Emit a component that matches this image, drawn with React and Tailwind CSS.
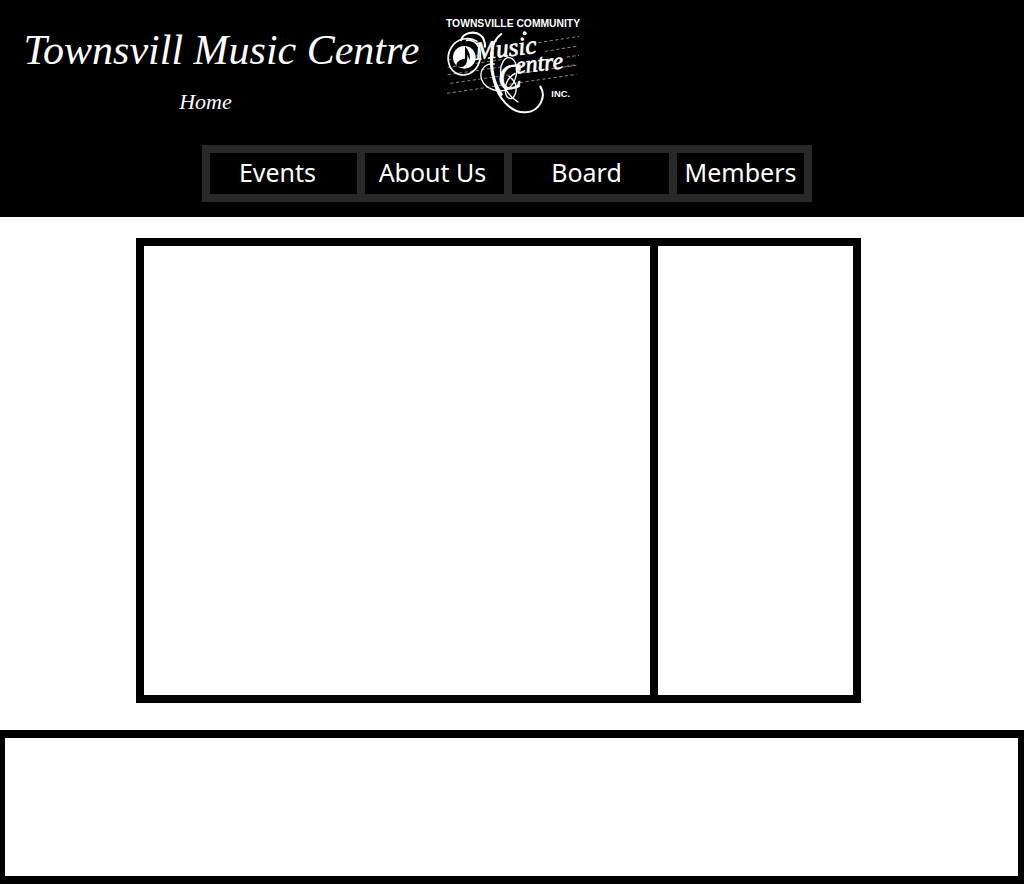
const links = [
  { label: 'Events', pad: 'pr-3' },
  { label: 'About Us', pad: 'pr-1' },
  { label: 'Board', pad: 'pr-2' },
  { label: 'Members', pad: 'pr-0' },
];

function Logo() {
  return (
    <svg
      viewBox="0 0 465 345"
      className="h-[115px] w-[155px] shrink-0"
      role="img"
      aria-label="Townsville Community Music Centre Inc."
      fill="none"
      stroke="#fff"
      strokeLinecap="round"
    >
      <g stroke="#c8c8c8" strokeWidth="2" strokeDasharray="10 7" strokeLinecap="butt">
        <path d="M310 98 L432 79" />
        <path d="M38 150 L130 137 M330 124 L424 109" />
        <path d="M38 172 L200 149 M395 141 L432 136" />
        <path d="M38 194 L200 171 M392 169 L424 164" />
        <path d="M46 220 L424 166" />
        <path d="M36 250 L424 193" />
      </g>
      <circle cx="88" cy="142" r="34" fill="#fff" stroke="none" />
      <path d="M90 109 V146 C72 148 62 158 65 169 L76 172 C91 170 98 162 97 134 L104 151 C108 132 98 119 90 109 Z" fill="#000" stroke="none" />
      <path d="M126 94 C104 78 64 85 48 114 C30 145 42 184 72 193 C105 202 132 176 136 142 C139 108 119 88 95 91" strokeWidth="5" />
      <path d="M78 91 C84 68 118 61 137 76 C149 85 150 97 150 110" strokeWidth="6" />
      <path d="M199 72 C180 86 172 106 170 126 C166 152 169 184 177 212 C188 263 226 309 272 307 C315 305 335 259 316 230" strokeWidth="6" />
      <path d="M171 128 C166 184 180 227 199 253" strokeWidth="9" />
      <path d="M178 162 C148 158 130 184 141 211 C151 237 190 249 214 239 C238 228 249 193 244 169 C239 139 214 135 203 157 C188 184 200 246 249 276" strokeWidth="4" />
      <path d="M222 199 C240 211 250 232 239 256 C227 276 211 263 211 239 C211 215 222 200 240 190" strokeWidth="4" />
      <g fill="#fff" stroke="#fff" strokeWidth="2" fontFamily="'Liberation Serif', serif" fontStyle="italic">
        <text x="122" y="149" fontSize="76" transform="rotate(-6 122 149)">Music</text>
        <text x="192" y="240" transform="rotate(-6 192 240)">
          <tspan fontSize="106">C</tspan>
          <tspan x="247" dy="-44" fontSize="72">entre</tspan>
        </text>
      </g>
      <circle cx="269" cy="70" r="6" fill="#fff" stroke="none" />
      <g fill="#fff" stroke="none" fontFamily="'Liberation Sans', sans-serif" fontWeight="700">
        <text x="33" y="51" fontSize="31">TOWNSVILLE COMMUNITY</text>
        <text x="349" y="261" fontSize="28">INC.</text>
      </g>
    </svg>
  );
}

export default function App() {
  return (
    <div className="bg-white">
      <header className="bg-black pt-[10px] pb-[15px] text-white">
        <div className="flex items-start">
          <div className="flex w-[435px] shrink-0 flex-col items-center pt-3 pr-2 font-['Liberation_Serif',serif] italic">
            <h1 className="pl-4 text-[42px] leading-[56px] whitespace-nowrap">Townsvill Music Centre</h1>
            <p className="pt-2 pr-4 text-[22px] leading-8">Home</p>
          </div>
          <Logo />
        </div>
        <div className="pt-5 pr-[212px] pl-[202px]">
          <nav className="grid grid-cols-[147fr_139fr_157fr_127fr] gap-2 bg-[#282828] p-2">
            {links.map(({ label, pad }) => (
              <a
                key={label}
                href="#"
                className={`flex h-[41px] items-center justify-center bg-black pb-1 font-['Noto_Sans',sans-serif] text-[25px] leading-8 whitespace-nowrap ${pad}`}
              >
                {label}
              </a>
            ))}
          </nav>
        </div>
      </header>
      <main className="pt-[21px] pr-[163px] pb-[27px] pl-[136px]">
        <div className="grid min-h-[465px] grid-cols-[506fr_195fr] gap-2 bg-black p-2">
          <section className="bg-white" />
          <aside className="bg-white" />
        </div>
      </main>
      <footer className="min-h-[154px] border-y-8 border-r-[6px] border-l-[5px] border-black" />
    </div>
  );
}
